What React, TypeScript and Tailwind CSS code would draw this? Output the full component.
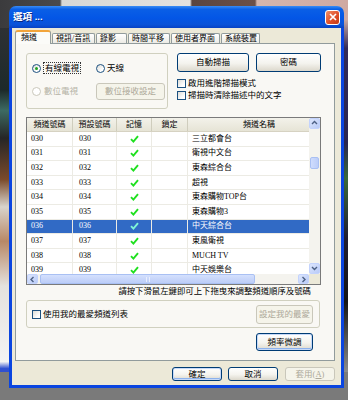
import React from 'react'
import clsx from 'clsx'

const ui = "font-['Liberation_Serif','Noto_Sans_CJK_TC',serif]"

type Row = { ch: string; name: string; sel?: boolean }

const rows: Row[] = [
  { ch: '030', name: '三立都會台' },
  { ch: '031', name: '衛視中文台' },
  { ch: '032', name: '東森綜合台' },
  { ch: '033', name: '超視' },
  { ch: '034', name: '東森購物TOP台' },
  { ch: '035', name: '東森購物3' },
  { ch: '036', name: '中天綜合台', sel: true },
  { ch: '037', name: '東風衛視' },
  { ch: '038', name: 'MUCH TV' },
  { ch: '039', name: '中天娛樂台' },
]

function Check({ selected }: { selected?: boolean }) {
  return (
    <svg width="9" height="8" viewBox="0 0 9 8">
      <path
        d="M1 4.2 L3.4 6.6 L8 1.2"
        fill="none"
        stroke={selected ? '#7ff5d6' : '#1fe01f'}
        strokeWidth="1.9"
      />
    </svg>
  )
}

function Radio({ checked, disabled }: { checked?: boolean; disabled?: boolean }) {
  return (
    <span
      className={clsx(
        'flex h-[9px] w-[9px] shrink-0 items-center justify-center rounded-full border',
        disabled
          ? 'border-[#cac8bb] bg-white'
          : 'border-[#1c5180] bg-[linear-gradient(135deg,#dcdcd7,#ffffff_70%)]'
      )}
    >
      {checked && <span className="h-[3px] w-[3px] rounded-full bg-[#21a121]" />}
    </span>
  )
}

function Box() {
  return (
    <span className="h-[9px] w-[9px] shrink-0 border border-[#1c5180] bg-[linear-gradient(135deg,#dcdcd7,#ffffff_75%)]" />
  )
}

function Btn({
  children,
  className,
  disabled,
  def,
}: {
  children: React.ReactNode
  className?: string
  disabled?: boolean
  def?: boolean
}) {
  return (
    <div
      className={clsx(
        'flex shrink-0 items-center justify-center rounded-[3px] border text-[8.5px] leading-none',
        disabled
          ? 'border-[#c9c7ba] bg-[#f5f4ea] text-[#aca899]'
          : 'border-[#003c74] bg-[linear-gradient(180deg,#ffffff_0%,#f4f3ee_55%,#dcd8cc_100%)] text-black',
        def && 'shadow-[inset_0_0_0_1px_#c6d9f8,inset_0_-1px_0_1px_#8db2ec]',
        className
      )}
    >
      {children}
    </div>
  )
}

function Arrow({ dir }: { dir: 'up' | 'down' | 'left' | 'right' }) {
  const d = {
    up: 'M1 4 L3.5 1.5 L6 4',
    down: 'M1 2 L3.5 4.5 L6 2',
    left: 'M4.5 1 L2 3.5 L4.5 6',
    right: 'M2.5 1 L5 3.5 L2.5 6',
  }[dir]
  return (
    <svg width="7" height="7" viewBox="0 0 7 7">
      <path d={d} fill="none" stroke="#4d6185" strokeWidth="1.4" />
    </svg>
  )
}

function ScrollBtn({ dir, className }: { dir: 'up' | 'down' | 'left' | 'right'; className?: string }) {
  return (
    <div
      className={clsx(
        'flex shrink-0 items-center justify-center rounded-[2px] border border-[#c3d3fd] bg-[linear-gradient(135deg,#dde6fd,#b9cbf7)]',
        className
      )}
    >
      <Arrow dir={dir} />
    </div>
  )
}

const tabs = [
  { label: '視訊/音訊', w: 'w-[43px]' },
  { label: '錄影', w: 'w-[31px]' },
  { label: '時間平移', w: 'w-[42px]' },
  { label: '使用者界面', w: 'w-[49px]' },
  { label: '系統裝置', w: 'w-[39px]' },
]

export default function App() {
  return (
    <div className={clsx('relative h-[400px] w-[348px] overflow-hidden bg-[#7a7a7a]', ui)}>
      {/* photo behind the dialog */}
      <div className="absolute left-0 top-0 h-[372px] w-[348px] bg-[linear-gradient(90deg,#3b3b3d_0px,#4a4a4c_60px,#d8d8d6_62px,#e4e2df_190px,#5a4540_192px,#6b5048_255px,#d4b6ad_257px,#cfa9a2_348px)]" />
      <div className="absolute left-0 top-[28px] h-[344px] w-[9px] bg-[linear-gradient(180deg,#2e3134_0%,#1d2a2a_18%,#3d6a62_24%,#262626_32%,#7a4a2a_44%,#d9d4cc_52%,#b88866_62%,#e4e2de_75%,#f4f4f4_97%,#3050d0_99%)]" />
      <div className="absolute right-0 top-[20px] h-[352px] w-[5px] bg-[linear-gradient(180deg,#c9a7a2_0%,#332a58_8%,#2a2450_35%,#3a6a3a_45%,#201c30_62%,#141414_80%,#8c8c8c_100%)]" />

      {/* dialog window */}
      <div className="absolute left-[9px] top-[6px] flex w-[335px] flex-col">
        <div className="flex h-[22px] items-center justify-between rounded-t-[7px] bg-[linear-gradient(180deg,#3a8cf5_0%,#0a5fe6_15%,#0356e6_55%,#0a52d8_85%,#0742c4_100%)] pl-[4px] pr-[4px]">
          <span className="font-['Liberation_Sans','Noto_Sans_CJK_TC',sans-serif] text-[9.5px] font-bold leading-none text-white [text-shadow:1px_1px_0_#0a2a80]">
            選項 ...
          </span>
          <div className="flex h-[15px] w-[15px] items-center justify-center rounded-[3px] border border-white bg-[linear-gradient(135deg,#f0906a,#e0502a_55%,#c43a15)]">
            <svg width="8" height="8" viewBox="0 0 8 8">
              <path d="M1 1 L7 7 M7 1 L1 7" stroke="#fff" strokeWidth="1.7" />
            </svg>
          </div>
        </div>

        <div className="flex h-[360px] flex-col border-x-[3px] border-b-[3px] border-[#0a45e0] bg-[#ece9d8] pl-[3px] pr-[6px] pt-[2px]">
          {/* tabs */}
          <div className="flex h-[13px] items-end">
            <div className="relative z-10 -mb-px flex h-[14px] w-[36px] items-center rounded-t-[3px] border-x border-t-2 border-x-[#919b9c] border-t-[#f2a43a] bg-[#fbfbf8] pl-[5px] text-[8px] leading-none">
              頻道
            </div>
            {tabs.map((t) => (
              <div
                key={t.label}
                className={clsx(
                  'ml-px flex h-[10px] items-center rounded-t-[2px] border-x border-t border-[#919b9c] bg-[linear-gradient(180deg,#ffffff,#ecebe5)] pl-[3px] text-[8px] leading-none',
                  t.w
                )}
              >
                {t.label}
              </div>
            ))}
          </div>

          {/* tab panel */}
          <div className="flex h-[318px] w-[320px] flex-col border border-[#919b9c] bg-[#f9f8f4] pl-[10px] pr-[13px] pt-[9px] text-[8.5px] leading-none">
            <div className="flex h-[56px]">
              <div className="flex w-[142px] flex-col rounded-[3px] border border-[#d0d0bf] pl-[5px] pt-[8px]">
                <div className="flex h-[12px] items-center">
                  <div className="flex w-[64px] items-center gap-[2px]">
                    <Radio checked />
                    <span className="border border-dotted border-[#333] px-px py-px">有線電視</span>
                  </div>
                  <div className="flex items-center gap-[2px]">
                    <Radio />
                    <span>天線</span>
                  </div>
                </div>
                <div className="mt-[9px] flex h-[17px] items-center">
                  <div className="flex w-[64px] items-center gap-[3px] text-[#b5b3a6]">
                    <Radio disabled />
                    <span>數位電視</span>
                  </div>
                  <Btn disabled className="h-[17px] w-[69px]">
                    數位接收設定
                  </Btn>
                </div>
              </div>

              <div className="ml-[9px] flex flex-1 flex-col">
                <div className="flex gap-[7px]">
                  <Btn className="h-[19px] w-[72px]">自動掃描</Btn>
                  <Btn className="h-[19px] w-[65px]">密碼</Btn>
                </div>
                <div className="mt-[5px] flex h-[12px] items-center gap-[2px]">
                  <Box />
                  <span>啟用進階掃描模式</span>
                </div>
                <div className="flex h-[12px] items-center gap-[2px]">
                  <Box />
                  <span>掃描時清除描述中的文字</span>
                </div>
              </div>
            </div>

            {/* channel list */}
            <div className="mt-[8px] flex h-[168px] w-[295px] flex-col border border-[#7a7a7a] bg-white">
              <div className="flex h-[156px]">
                <div className="w-[282px] overflow-hidden">
                  <div className="flex h-[14px] w-[303px] border-b border-[#d6d2c2] bg-[linear-gradient(180deg,#f3f2ea,#e6e4d6)] text-[8px]">
                    <div className="flex w-[46px] items-center justify-center border-r border-[#cfcdbd]">頻道號碼</div>
                    <div className="flex w-[44px] items-center justify-center border-r border-[#cfcdbd]">預設號碼</div>
                    <div className="flex w-[35px] items-center justify-center border-r border-[#cfcdbd]">記憶</div>
                    <div className="flex w-[36px] items-center justify-center border-r border-[#cfcdbd]">鎖定</div>
                    <div className="flex w-[142px] items-center justify-center">頻道名稱</div>
                  </div>
                  {rows.map((r) => (
                    <div
                      key={r.ch}
                      className={clsx(
                        'flex h-[14.6px] w-[303px] text-[8px]',
                        r.sel ? 'bg-[#316ac5] text-white' : 'text-black'
                      )}
                    >
                      <div className="flex w-[46px] items-center border-b border-r border-[#ecebe4] pl-[4px]">{r.ch}</div>
                      <div className="flex w-[44px] items-center border-b border-r border-[#ecebe4] pl-[6px]">{r.ch}</div>
                      <div className="flex w-[35px] items-center justify-center border-b border-r border-[#ecebe4]">
                        <Check selected={r.sel} />
                      </div>
                      <div className="w-[36px] border-b border-r border-[#ecebe4]" />
                      <div className="flex w-[142px] items-center border-b border-[#ecebe4] pl-[4px]">{r.name}</div>
                    </div>
                  ))}
                </div>
                <div className="flex w-[11px] flex-col bg-[#f4f3ee]">
                  <ScrollBtn dir="up" className="h-[11px] w-[11px]" />
                  <div className="flex-1">
                    <div className="ml-px mt-[28px] h-[12px] w-[9px] rounded-[2px] border border-[#a9c0f3] bg-[linear-gradient(90deg,#cfdcfd,#bccdf8)]" />
                  </div>
                  <ScrollBtn dir="down" className="h-[11px] w-[11px]" />
                </div>
              </div>
              <div className="flex h-[10px]">
                <div className="flex w-[282px] bg-[#f4f3ee]">
                  <ScrollBtn dir="left" className="h-[10px] w-[11px]" />
                  <div className="flex-1">
                    <div className="ml-[2px] flex h-[10px] w-[215px] items-center justify-center rounded-[2px] border border-[#a9c0f3] bg-[linear-gradient(180deg,#d4e0fd,#bccdf8)]">
                      <div className="h-[5px] w-[4px] border-x border-[#e8eefe]" />
                    </div>
                  </div>
                  <ScrollBtn dir="right" className="h-[10px] w-[11px]" />
                </div>
                <div className="w-[11px] bg-[#ece9d8]" />
              </div>
            </div>

            <div className="flex h-[15px] w-[295px] items-center justify-end pr-[10px] text-[8.4px]">
              請按下滑鼠左鍵即可上下拖曳來調整頻道順序及號碼
            </div>

            <div className="flex h-[28px] w-[294px] items-center justify-between rounded-[3px] border border-[#d0d0bf] pl-[5px] pr-[6px]">
              <div className="flex items-center gap-[2px]">
                <Box />
                <span>使用我的最愛頻道列表</span>
              </div>
              <Btn disabled className="h-[19px] w-[57px]">
                設定我的最愛
              </Btn>
            </div>

            <div className="mt-[5px] flex w-[295px] justify-end pr-[8px]">
              <Btn def className="h-[18px] w-[57px]">
                頻率微調
              </Btn>
            </div>
          </div>

          {/* dialog buttons */}
          <div className="mt-[6px] flex justify-end gap-[6px]">
            <Btn def className="h-[14px] w-[50px]">
              確定
            </Btn>
            <Btn className="h-[14px] w-[50px]">取消</Btn>
            <Btn disabled className="ml-px h-[14px] w-[50px]">
              套用(<span className="underline">A</span>)
            </Btn>
          </div>
        </div>
      </div>
    </div>
  )
}
